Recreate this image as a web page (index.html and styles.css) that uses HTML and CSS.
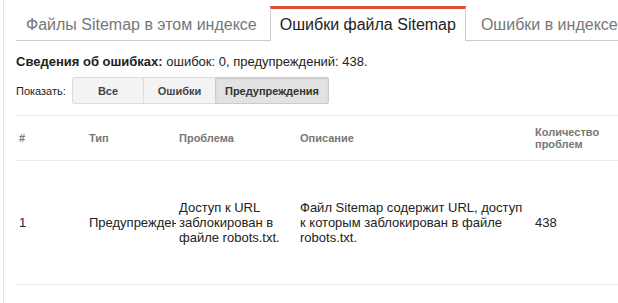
FILE: index.html
```html
<!DOCTYPE html>
<html lang="ru">
<head>
    <meta charset="UTF-8">
    <title>Ошибки файла Sitemap</title>
    <link rel="stylesheet" href="styles.css">
</head>
<body>

<div class="page">
    <div class="tabs">
        <div class="tab">Файлы Sitemap в этом индексе</div>
        <div class="tab active">Ошибки файла Sitemap</div>
        <div class="tab">Ошибки в индексе</div>
    </div>

    <div class="summary">
        <b>Сведения об ошибках:</b> ошибок: 0, предупреждений: 438.
    </div>

    <div class="filter">
        <span class="filter-label">Показать:</span>
        <div class="btn-group">
            <button class="btn btn-all">Все</button>
            <button class="btn btn-err">Ошибки</button>
            <button class="btn btn-warn selected">Предупреждения</button>
        </div>
    </div>

    <table class="issues">
        <thead>
            <tr>
                <th class="col-num">#</th>
                <th class="col-type">Тип</th>
                <th class="col-problem">Проблема</th>
                <th class="col-desc">Описание</th>
                <th class="col-count">Количество проблем</th>
            </tr>
        </thead>
        <tbody>
            <tr>
                <td>1</td>
                <td class="clip">Предупреждение</td>
                <td>Доступ к URL заблокирован в файле robots.txt.</td>
                <td>Файл Sitemap содержит URL, доступ к которым заблокирован в файле robots.txt.</td>
                <td>438</td>
            </tr>
        </tbody>
    </table>
</div>

</body>
</html>
```

FILE: styles.css
```css
body {
    font-family: "Liberation Sans", Arial, sans-serif;
    background-color: #fff;
    color: #222;
    margin: 0;
    padding: 0;
}
.page {
    margin-left: 3px;
    padding-left: 12px;
    border-left: 1px solid #e5e5e5;
    height: 100vh;
    overflow: hidden;
}
.tabs {
    display: flex;
    padding-top: 6px;
    border-bottom: 1px solid #ccc;
    white-space: nowrap;
}
.tab {
    height: 34px;
    line-height: 32px;
    padding: 0 9px;
    margin-right: 3px;
    font-size: 16px;
    color: #777;
    border: 1px solid transparent;
    border-top-width: 3px;
    border-bottom: none;
    box-sizing: border-box;
}
.active {
    color: #222;
    background-color: #fff;
    border-color: #ccc;
    border-top-color: #dd4b39;
    height: 35px;
    margin-bottom: -1px;
    margin-right: 5px;
}
.summary {
    font-size: 13px;
    margin-top: 13px;
}
.filter {
    display: flex;
    align-items: center;
    margin-top: 8px;
}
.filter-label {
    font-size: 11px;
    width: 56px;
}
.btn-group {
    display: flex;
}
.btn {
    font-family: inherit;
    font-size: 11px;
    font-weight: bold;
    color: #444;
    height: 27px;
    background-color: #f3f3f3;
    border: 1px solid #dcdcdc;
    margin: 0 0 0 -1px;
    padding: 0 8px;
}
.btn-all {
    width: 72px;
    margin-left: 0;
    border-radius: 2px 0 0 2px;
}
.btn-err {
    width: 73px;
}
.btn-warn {
    width: 114px;
    border-radius: 0 2px 2px 0;
}
.selected {
    background-color: #e2e2e2;
    border-color: #ccc;
    color: #333;
    box-shadow: inset 0 1px 2px rgba(0,0,0,0.1);
}
.issues {
    margin-top: 11px;
    border-collapse: collapse;
    table-layout: fixed;
    width: 620px;
}
.issues th, .issues td {
    padding: 0 3px;
    text-align: left;
    vertical-align: middle;
}
.issues th {
    height: 44px;
    font-size: 11px;
    color: #777;
    line-height: 12px;
    border-top: 1px solid #ebebeb;
    border-bottom: 1px solid #ebebeb;
}
.issues td {
    height: 123px;
    font-size: 13px;
    line-height: 15px;
    border-bottom: 1px solid #ebebeb;
}
.col-num {
    width: 64px;
}
.col-type {
    width: 84px;
}
.col-problem {
    width: 115px;
}
.col-desc {
    width: 229px;
}
.clip {
    white-space: nowrap;
    overflow: hidden;
}
```
